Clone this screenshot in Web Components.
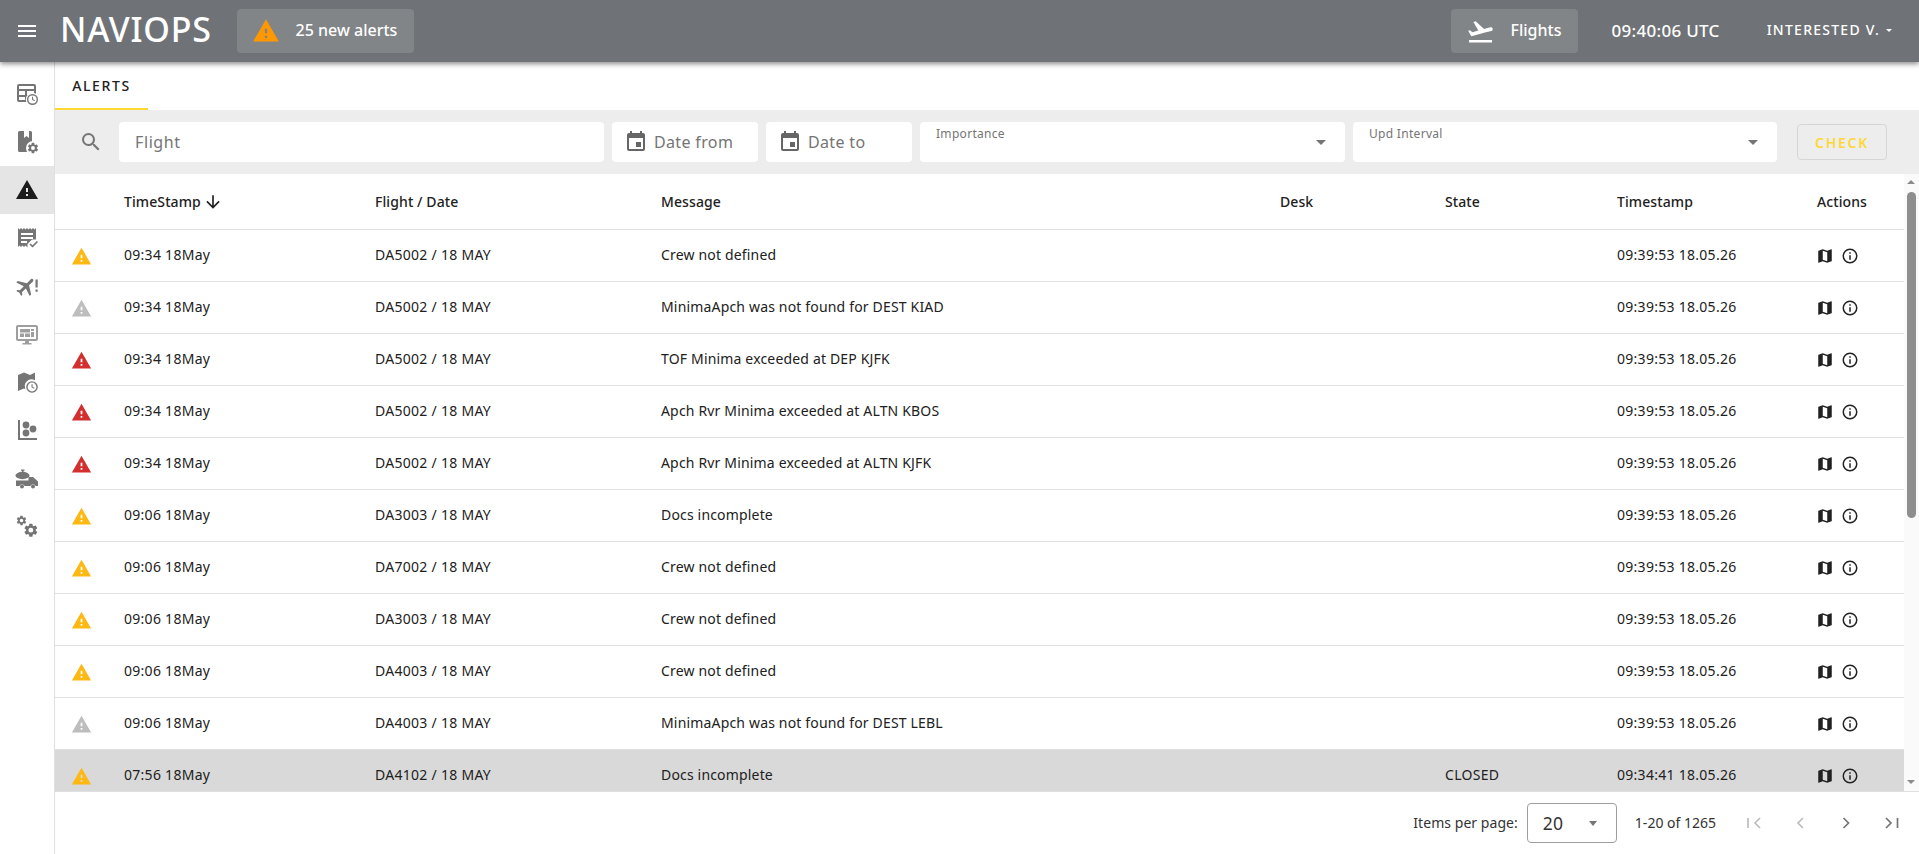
<!DOCTYPE html>
<html><head><meta charset="utf-8"><style>
html,body{margin:0;height:100%;overflow:hidden;font-family:"Noto Sans",sans-serif;color:#212121;background:#fff}
</style></head><body>
<app-shell></app-shell>
<script>
const GEAR='M19.14 12.94c.04-.3.06-.61.06-.94 0-.32-.02-.64-.07-.94l2.03-1.58a.49.49 0 0 0 .12-.61l-1.92-3.32a.488.488 0 0 0-.59-.22l-2.39.96c-.5-.38-1.03-.7-1.62-.94l-.36-2.54a.484.484 0 0 0-.48-.41h-3.84c-.24 0-.43.17-.47.41l-.36 2.54c-.59.24-1.13.57-1.62.94l-2.39-.96c-.22-.08-.47 0-.59.22L2.74 8.87c-.12.21-.08.47.12.61l2.03 1.58c-.05.3-.09.63-.09.94s.02.64.07.94l-2.03 1.58a.49.49 0 0 0-.12.61l1.92 3.32c.12.22.37.29.59.22l2.39-.96c.5.38 1.03.7 1.62.94l.36 2.54c.05.24.24.41.48.41h3.84c.24 0 .44-.17.47-.41l.36-2.54c.59-.24 1.13-.56 1.62-.94l2.39.96c.22.08.47 0 .59-.22l1.92-3.32c.12-.22.07-.47-.12-.61l-2.01-1.58zM12 15.6A3.6 3.6 0 1 1 12 8.4a3.6 3.6 0 0 1 0 7.2z';
const gear=(x,y,s)=>`<path transform="translate(${x} ${y}) scale(${s})" fill-rule="evenodd" d="${GEAR}"/>`;
const clock=(cx,cy,r)=>`<circle cx="${cx}" cy="${cy}" r="${r+1.2}" fill="#fff"/><circle cx="${cx}" cy="${cy}" r="${r}"/><circle cx="${cx}" cy="${cy}" r="${r-1.4}" fill="#fff"/><path d="M${cx-.5} ${cy-2.8}h1.1v2.5l2 1.2-.6.9-2.5-1.5z"/>`;
const I={
 menu:'<path d="M3 18h18v-2H3v2zm0-5h18v-2H3v2zm0-7v2h18V6H3z"/>',
 warn:'<path d="M1 21h22L12 2 1 21zm12-3h-2v-2h2v2zm0-4h-2v-4h2v4z"/>',
 takeoff:'<path d="M2.5 19h19v2h-19zm19.57-9.36c-.21-.8-1.04-1.28-1.84-1.06L14.92 10l-6.9-6.43-1.93.51 4.14 7.17-4.97 1.33-1.97-1.54-1.45.39 1.82 3.16.77 1.33 1.6-.43 5.31-1.42 4.35-1.16L21 11.49c.81-.23 1.28-1.05 1.07-1.85z"/>',
 search:'<path d="M15.5 14h-.79l-.28-.27A6.47 6.47 0 0 0 16 9.5 6.5 6.5 0 1 0 9.5 16c1.61 0 3.09-.59 4.23-1.57l.27.28v.79l5 4.99L20.49 19l-4.99-5zm-6 0C7.01 14 5 11.99 5 9.5S7.01 5 9.5 5 14 7.01 14 9.5 11.99 14 9.5 14z"/>',
 cal:'<path d="M17 12h-5v5h5v-5zM16 1v2H8V1H6v2H5a2 2 0 0 0-2 2v14a2 2 0 0 0 2 2h14a2 2 0 0 0 2-2V5a2 2 0 0 0-2-2h-1V1h-2zm3 18H5V8h14v11z"/>',
 map:'<path d="M20.5 3l-.16.03L15 5.1 9 3 3.36 4.9c-.21.07-.36.25-.36.48V20.5c0 .28.22.5.5.5l.16-.03L9 18.9l6 2.1 5.64-1.9c.21-.07.36-.25.36-.48V3.5c0-.28-.22-.5-.5-.5zM15 19l-6-2.11V5l6 2.11V19z"/>',
 info:'<path d="M11 7h2v2h-2zm0 4h2v6h-2zm1-9a10 10 0 1 0 0 20 10 10 0 0 0 0-20zm0 18a8 8 0 1 1 0-16 8 8 0 0 1 0 16z"/>',
 down:'<path d="M20 12l-1.41-1.41L13 16.17V4h-2v12.17l-5.58-5.59L4 12l8 8 8-8z"/>'
};
const svg=(n,s,c)=>`<svg width="${s}" height="${s}" viewBox="0 0 24 24" fill="${c||'currentColor'}">${I[n]}</svg>`;
const def=(name,css,html)=>customElements.define(name,class extends HTMLElement{
 connectedCallback(){if(this.shadowRoot)return;const r=this.attachShadow({mode:'open'});
 r.innerHTML=`<style>${css}</style>`+(typeof html==='function'?html(this):html);}
});
def('top-bar',`
:host{display:flex;align-items:center;height:62px;background:#6f7377;color:#fff;box-shadow:0 2px 5px rgba(0,0,0,.45);position:relative;z-index:2;flex:none}
.m{margin-left:15px;display:flex}
.logo{font-size:34px;line-height:40px;margin-left:21px;font-weight:500;letter-spacing:.75px;padding-bottom:4px}
.b{display:flex;align-items:center;height:44px;background:#818588;border-radius:4px;font-size:16px;font-weight:500}
.b span{padding-bottom:2px}
.al{margin-left:25px;width:177px;padding-left:15px;box-sizing:border-box}
.al span{margin-left:16px}
.sp{flex:1}
.fl{width:127px;padding-left:15px;box-sizing:border-box}
.fl span{margin-left:15px}
.t{font-size:17px;font-weight:500;margin-left:33px;letter-spacing:.3px;padding-bottom:2px}
.u{font-size:14px;font-weight:500;letter-spacing:1.25px;margin-left:47px;margin-right:27px;display:flex;align-items:center;padding-bottom:3px}
.u i{border:3.5px solid transparent;border-top-color:#fff;border-bottom:0;margin-left:6px;display:block;margin-top:1px}
`,`<div class="m">${svg('menu',24)}</div><div class="logo">NAVIOPS</div>
<div class="b al">${svg('warn',28,'#ff9800')}<span>25 new alerts</span></div><div class="sp"></div>
<div class="b fl">${svg('takeoff',29)}<span>Flights</span></div><div class="t">09:40:06 UTC</div><div class="u">INTERESTED V.<i></i></div>`);
const N=[
'<path fill-rule="evenodd" d="M4 2h15a2 2 0 0 1 2 2v14a2 2 0 0 1-2 2H4a2 2 0 0 1-2-2V4a2 2 0 0 1 2-2zm0 2v3h15V4H4zm0 5v4h6V9H4zm8 0v4h7V9h-7zm-8 6v3h6v-3H4z"/>'+clock(17.5,17.5,5.5),
'<path d="M4.5 1H9v7l2.5-2L14 8V1h1.5A1.500 1.500 0 0 1 17 2.500V22H4.500A1.500 1.500 0 0 1 3 20.500v-18A1.500 1.500 0 0 1 4.500 1z"/><circle cx="18" cy="18" r="7" fill="#fff"/>'+gear(11.5,11.5,.54),
I.warn,
'<path fill-rule="evenodd" d="M3 2l1.500 1.500L6 2l1.500 1.500L9 2l1.500 1.500L12 2l1.500 1.500L15 2l1.500 1.500L18 2l1.500 1.500L21 2v11.500h-4l-4.500 4.500v3.500L12 21l-1.500-1.500L9 21l-1.500-1.500L6 21l-1.500-1.500L3 21V2zm3 5v2h12V7H6zm0 4v2h12v-2H6zm0 4v2h6v-2H6z"/><path d="M14.500 18.500l1.100-1.100 1.900 1.900 4.400-4.400 1.100 1.100-5.500 5.500z"/>',
'<path transform="rotate(45 10.5 12) translate(-.5 0)" d="M21 16v-2l-8-5V3.500c0-.83-.67-1.500-1.500-1.500S10 2.670 10 3.500V9l-8 5v2l8-2.500V19l-2 1.500V22l3.500-1 3.500 1v-1.500L13 19v-5.500l8 2.500z"/><path d="M20.500 5.500h2.200v8h-2.200zm0 10h2.200v2.200h-2.200z"/>',
'<path fill-rule="evenodd" d="M21 3H3c-1.100 0-2 .9-2 2v12c0 1.100.9 2 2 2h7v2H7.500v1.500h9V21H14v-2h7c1.100 0 2-.9 2-2V5c0-1.100-.9-2-2-2zm0 14H3V5h18v12zM5 7h10v3.500H5zm11 0h3v2h-3zm0 3h3v5h-3zM5 11.500h4V15H5zm5 0h5V15h-5z"/>',
'<path d="M3 5l6-2.500L15 5l5-2.500v8A6.500 6.500 0 0 0 11 19.500l-2-1-6 2.500V5z"/>'+clock(17,17,5.8),
'<path d="M3 2h2v18h17v2H3z"/><circle cx="11" cy="7" r="3.4"/><circle cx="11" cy="15" r="3.4"/><circle cx="18" cy="11" r="3.4"/>',
'<ellipse cx="7.5" cy="9.5" rx="7" ry="3.7"/><path d="M6 3.500h3.500v1.200H8.500V6h-1.500V4.700H6z"/><path d="M1 14.500h12.500V11H18l5 4.500V20h-2.300a3 3 0 0 0-5.400 0H9.700a3 3 0 0 0-5.400 0H1z"/><circle cx="7" cy="20.5" r="2"/><circle cx="18" cy="20.5" r="2"/>',
gear(.5,.5,.5)+gear(7.7,8,.68)
];
def('side-nav',`
:host{display:block;width:54px;flex:none;border-right:1px solid #e0e0e0;box-sizing:content-box;background:#fff;padding-top:8px}
.i{height:48px;display:flex;align-items:center;justify-content:center;color:#757575}
.i.a{color:#1c1c1c;background:#e5e5e5}
.i.l{color:#9e9e9e}
`,()=>N.map((p,i)=>`<div class="i${i==2?' a':''}${i==5?' l':''}"><svg width="24" height="24" viewBox="0 0 24 24" fill="currentColor">${p}</svg></div>`).join(''));
def('tab-bar',`
:host{display:flex;height:48px;flex:none;background:#fff}
.t{width:93px;height:48px;box-sizing:border-box;border-bottom:2px solid #fdd835;font-size:14px;font-weight:500;letter-spacing:1.6px;display:flex;align-items:center;justify-content:center;padding-top:1px}
`,`<div class="t"><slot></slot></div>`);
def('text-field',`
:host{display:flex;align-items:center;height:40px;background:#fff;border-radius:4px;box-sizing:border-box;font-size:16px;color:#757575;letter-spacing:.6px;white-space:nowrap;flex:none}
:host([date]){padding-left:12px;letter-spacing:.35px}
svg{margin-right:6px}
:host(:not([date])){padding-left:16px}
`,h=>(h.hasAttribute('date')?svg('cal',24,'#666'):'')+'<slot></slot>');
def('select-field',`
:host{display:block;position:relative;height:40px;background:#fff;border-radius:4px;box-sizing:border-box;padding:5px 16px;font-size:12px;line-height:14px;color:#757575;letter-spacing:.3px;flex:none}
i{position:absolute;right:19px;top:18px;border:5px solid transparent;border-top-color:#757575;border-bottom:0}
`,`<slot></slot><i></i>`);
def('filter-bar',`
:host{display:flex;align-items:center;gap:8px;height:64px;flex:none;background:#ededed;box-sizing:border-box}
.s{width:56px;flex:none;display:flex;padding-left:24px;box-sizing:border-box}
.c{width:90px;height:36px;box-sizing:border-box;border:1px solid #d6d6d6;border-radius:4px;color:#fdd835;font-size:14px;font-weight:600;letter-spacing:1.7px;display:flex;align-items:center;justify-content:center;margin-left:12px;flex:none}
`,`<div class="s">${svg('search',24,'#757575')}</div><slot></slot><div class="c">CHECK</div>`);
const colCss=`display:grid;grid-template-columns:69px 251px 286px 619px 165px 172px 200px 87px;`;
def('alert-head',`
:host{${colCss}height:56px;box-sizing:border-box;align-items:center;border-bottom:1px solid #e0e0e0;font-size:14px;font-weight:500;color:#212121;flex:none;letter-spacing:.1px}
.f{grid-column:2;display:flex;align-items:center}
svg{margin-left:2px}
`,`<div class="f">TimeStamp${svg('down',20)}</div><div>Flight / Date</div><div>Message</div><div>Desk</div><div>State</div><div>Timestamp</div><div>Actions</div>`);
const cols2={y:'#fdb813',g:'#bdbdbd',r:'#d32f2f'};
def('alert-row',`
:host{${colCss}height:52px;box-sizing:border-box;align-items:center;border-bottom:1px solid #e0e0e0;font-size:14px;color:#212121;flex:none;letter-spacing:.17px;padding-bottom:2px}
:host([sel]){background:#d9d9d9}
.ic{display:flex;padding-left:16px;margin-top:4px}
.a{display:flex;gap:7px;align-items:center;margin-left:-1px;margin-top:3px}
.n{letter-spacing:.28px}
svg{display:block}
`,h=>{const g=a=>h.getAttribute(a)||'';return `<div class="ic">${svg('warn',21,cols2[g('k')])}</div><div class="n">${g('t')}</div><div class="n">${g('f')}</div><div>${g('m')}</div><div></div><div class="n">${g('s')}</div><div class="n">${g('u')}</div><div class="a">${svg('map',18)}${svg('info',18)}</div>`});
def('scroll-bar',`
:host{display:block;width:15px;flex:none;background:#fafafa;position:relative}
.u,.d{position:absolute;left:3px;border:4.5px solid transparent}
.u{top:6px;border-top:0;border-bottom-color:#8a8a8a}.d{bottom:7px;border-bottom:0;border-top-color:#8a8a8a}
.t{position:absolute;left:3px;width:9px;top:18px;height:326px;background:#8e8e8e;border-radius:5px}
`,`<div class="u"></div><div class="t"></div><div class="d"></div>`);
def('alert-table',`
:host{display:flex;flex:1;min-height:0;overflow:hidden}
.b{flex:1;min-width:0;overflow:hidden;display:flex;flex-direction:column}
`,`<div class="b"><slot></slot></div><scroll-bar></scroll-bar>`);
def('pager-bar',`
:host{display:flex;align-items:center;height:63px;flex:none;border-top:1px solid #e0e0e0;box-sizing:border-box;font-size:14px;justify-content:flex-end;color:#333;padding-right:15px;letter-spacing:.05px}
.l{padding-bottom:2px}
.s{width:90px;height:40px;border:1px solid #9e9e9e;border-radius:4px;box-sizing:border-box;margin-left:9px;display:flex;align-items:center;justify-content:space-between;padding:0 19px 0 15px;font-size:17.5px}
.s i{border:4.5px solid transparent;border-top:5px solid #757575;border-bottom:0}
.r{margin:0 26px 0 18px;letter-spacing:0;padding-bottom:2px}
svg{display:block}
.n{display:flex;gap:22px}
`,`<div class="l">Items per page:</div><div class="s">20<i></i></div><div class="r">1-20 of 1265</div>
<div class="n"><svg width="24" height="24" viewBox="0 0 24 24" fill="none" stroke="#bdbdbd" stroke-width="1.7"><path d="M6 7v10M18 7l-5 5 5 5"/></svg><svg width="24" height="24" viewBox="0 0 24 24" fill="none" stroke="#bdbdbd" stroke-width="1.7"><path d="M15 7l-5 5 5 5"/></svg><svg width="24" height="24" viewBox="0 0 24 24" fill="none" stroke="#757575" stroke-width="1.7"><path d="M9.5 7l5 5-5 5"/></svg><svg width="24" height="24" viewBox="0 0 24 24" fill="none" stroke="#757575" stroke-width="1.7"><path d="M6 7l5 5-5 5M17.5 7v10"/></svg></div>`);
const R=[['y','09:34 18May','DA5002 / 18 MAY','Crew not defined'],['g','09:34 18May','DA5002 / 18 MAY','MinimaApch was not found for DEST KIAD'],['r','09:34 18May','DA5002 / 18 MAY','TOF Minima exceeded at DEP KJFK'],['r','09:34 18May','DA5002 / 18 MAY','Apch Rvr Minima exceeded at ALTN KBOS'],['r','09:34 18May','DA5002 / 18 MAY','Apch Rvr Minima exceeded at ALTN KJFK'],['y','09:06 18May','DA3003 / 18 MAY','Docs incomplete'],['y','09:06 18May','DA7002 / 18 MAY','Crew not defined'],['y','09:06 18May','DA3003 / 18 MAY','Crew not defined'],['y','09:06 18May','DA4003 / 18 MAY','Crew not defined'],['g','09:06 18May','DA4003 / 18 MAY','MinimaApch was not found for DEST LEBL'],['y','07:56 18May','DA4102 / 18 MAY','Docs incomplete','CLOSED','09:34:41 18.05.26',1]];
const rows=R.map(r=>`<alert-row k="${r[0]}" t="${r[1]}" f="${r[2]}" m="${r[3]}" s="${r[4]||''}" u="${r[5]||'09:39:53 18.05.26'}"${r[6]?' sel':''}></alert-row>`).join('');
def('app-shell',`
:host{display:flex;flex-direction:column;height:854px;width:1919px;overflow:hidden}
.w{display:flex;flex:1;min-height:0}
.m{flex:1;min-width:0;display:flex;flex-direction:column}
`,`<top-bar></top-bar><div class="w"><side-nav></side-nav><div class="m"><tab-bar>ALERTS</tab-bar>
<filter-bar><text-field style="width:485px">Flight</text-field><text-field date style="width:146px">Date from</text-field><text-field date style="width:146px">Date to</text-field><select-field style="width:425px">Importance</select-field><select-field style="width:424px">Upd Interval</select-field></filter-bar>
<alert-table><alert-head></alert-head>${rows}</alert-table><pager-bar></pager-bar></div></div>`);
</script></body></html>
